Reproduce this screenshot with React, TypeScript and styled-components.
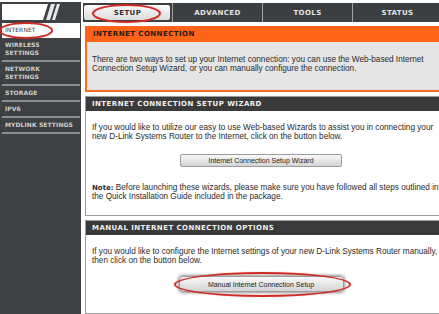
import React from 'react'
import styled, { createGlobalStyle, css } from 'styled-components'

const heading = `'DejaVu Sans', Verdana, sans-serif`
const copy = `'Liberation Sans', Arial, sans-serif`

const GlobalStyle = createGlobalStyle`
    html, body {
        margin: 0;
        padding: 0;
        background: #ffffff;
    }
`

const oval = css`
    &::after {
        content: '';
        position: absolute;
        border: 2px solid #cf2a24;
        border-radius: 50%;
        box-shadow: 0 0 1px rgba(207, 42, 36, 0.6);
        pointer-events: none;
    }
`

const Page = styled.div`
    display: flex;
    width: 439px;
    height: 314px;
    padding-top: 2px;
    box-sizing: border-box;
    overflow: hidden;
    background: #ffffff;
`

const Sidebar = styled.aside`
    flex: 0 0 81px;
    display: flex;
    flex-direction: column;
    padding: 2px 1px 0 2px;
    box-sizing: border-box;
    background: #3d4143;
`

const Logo = styled.div`
    height: 16px;
    margin: 0 1px 3px 0;

    svg {
        display: block;
    }
`

const NavList = styled.nav`
    display: flex;
    flex-direction: column;
`

const NavItem = styled.div<{ $active?: boolean }>`
    position: relative;
    padding: 3px 3px;
    font-family: ${heading};
    font-size: 6px;
    font-weight: bold;
    line-height: 8px;
    letter-spacing: 0.1px;
    text-transform: uppercase;
    color: #cfd0d0;
    border-bottom: 2px solid #8d9091;

    ${p =>
        p.$active &&
        css`
            padding: 3px 3px 4px;
            background: #ffffff;
            color: #3a3a3a;
            font-weight: normal;
            border-bottom: none;
            ${oval}
            &::after {
                left: -3px;
                top: -1px;
                width: 50px;
                height: 13px;
            }
        `}
`

const Main = styled.main`
    flex: 1;
    display: flex;
    flex-direction: column;
    margin-left: 2px;
    min-width: 0;
`

const Tabs = styled.div`
    display: grid;
    grid-template-columns: 89px 89px 89px 89px;
    column-gap: 1px;
    height: 20px;
    margin-top: 1px;
    background: #9fa3a4;
`

const Tab = styled.div<{ $active?: boolean }>`
    position: relative;
    display: flex;
    align-items: center;
    justify-content: center;
    font-family: ${heading};
    font-size: 7px;
    font-weight: bold;
    letter-spacing: 0.4px;
    color: #e3e4e4;
    background: #3b3f41;

    ${p =>
        p.$active &&
        css`
            color: #333333;

            &::before {
                content: '';
                position: absolute;
                inset: 2px 2px 2px 1px;
                background: linear-gradient(#fbfbfb, #dcdcdc);
                border-radius: 2px;
            }

            span {
                position: relative;
                z-index: 1;
            }

            ${oval}
            &::after {
                z-index: 2;
                left: 9px;
                right: 11px;
                top: 1px;
                bottom: -1px;
            }
        `}
`

const Sections = styled.div`
    display: flex;
    flex-direction: column;
    gap: 4px;
    padding: 4px 0 0 2px;
`

const Panel = styled.section<{ $tone?: 'orange' }>`
    border: 1px solid #9a9a9a;
    width: 358px;
    box-sizing: border-box;

    ${p =>
        p.$tone === 'orange' &&
        css`
            border: 2px solid #ff6a22;
            border-top: none;
        `}
`

const PanelHeader = styled.h2<{ $tone?: 'orange' }>`
    margin: 0;
    height: 14px;
    padding: 0 6px;
    display: flex;
    align-items: center;
    font-family: ${heading};
    font-size: 7px;
    font-weight: bold;
    letter-spacing: 0.45px;
    color: #f0f0f0;
    background: #3a3a3a;

    ${p =>
        p.$tone === 'orange' &&
        css`
            height: 16px;
            margin: 0 -2px;
            padding: 0 8px;
            color: #2a1a10;
            background: #ff6319;
        `}
`

const PanelBody = styled.div<{ $tone?: 'orange'; $tall?: boolean }>`
    padding: 13px 6px 0;
    min-height: ${p => (p.$tall ? 104 : 78)}px;
    box-sizing: border-box;
    background: #ffffff;

    ${p =>
        p.$tone === 'orange' &&
        css`
            min-height: 48px;
            padding: 14px 5px 0;
            background: #e5e5e5;
        `}
`

const Copy = styled.p`
    margin: 0;
    font-family: ${copy};
    font-size: 8.2px;
    line-height: 8.6px;
    color: #2a2a2a;
    white-space: nowrap;

    strong {
        font-family: ${heading};
        font-size: 7px;
    }
`

const ButtonRow = styled.div<{ $top: number; $bottom: number }>`
    display: flex;
    justify-content: center;
    margin: ${p => p.$top}px 6px ${p => p.$bottom}px 0;
`

const Button = styled.button<{ $highlight?: boolean }>`
    position: relative;
    width: 162px;
    height: 13px;
    padding: 0;
    font-family: ${copy};
    font-size: 7px;
    color: #222222;
    border: 1px solid #9c9c9c;
    border-radius: 2px;
    background: linear-gradient(#fafafa, #e2e2e2 60%, #d4d4d4);

    ${p =>
        p.$highlight &&
        css`
            width: 165px;
            height: 16px;
            border-radius: 4px;
            box-shadow: 0 0 3px 1px rgba(60, 60, 60, 0.55);
            ${oval}
            &::after {
                left: -6px;
                right: -8px;
                top: -5px;
                bottom: -6px;
            }
        `}
`

const LogoMark = () => (
    <svg width="77" height="16" viewBox="0 0 77 16">
        <rect width="77" height="16" fill="#3d4143" />
        <polygon points="0,0 46,0 41,16 0,16" fill="#ffffff" />
        <polygon points="49,0 53,0 48,16 44,16" fill="#e9e9e9" />
        <polygon points="55,0 58,0 53,16 50,16" fill="#e9e9e9" />
    </svg>
)

const navItems = ['Internet', 'Wireless Settings', 'Network Settings', 'Storage', 'IPv6', 'mydlink Settings']
const tabs = ['SETUP', 'ADVANCED', 'TOOLS', 'STATUS']

const App = () => (
    <>
        <GlobalStyle />
        <Page>
            <Sidebar>
                <Logo>
                    <LogoMark />
                </Logo>
                <NavList>
                    {navItems.map((item, index) => (
                        <NavItem key={item} $active={index === 0}>
                            {item === 'Wireless Settings' || item === 'Network Settings' ? (
                                <>
                                    {item.split(' ')[0]}
                                    <br />
                                    {item.split(' ')[1]}
                                </>
                            ) : (
                                item
                            )}
                        </NavItem>
                    ))}
                </NavList>
            </Sidebar>
            <Main>
                <Tabs>
                    {tabs.map((tab, index) => (
                        <Tab key={tab} $active={index === 0}>
                            <span>{tab}</span>
                        </Tab>
                    ))}
                </Tabs>
                <Sections>
                    <Panel $tone="orange">
                        <PanelHeader $tone="orange">INTERNET CONNECTION</PanelHeader>
                        <PanelBody $tone="orange">
                            <Copy>
                                There are two ways to set up your Internet connection: you can use the Web-based Internet
                                <br />
                                Connection Setup Wizard, or you can manually configure the connection.
                            </Copy>
                        </PanelBody>
                    </Panel>
                    <Panel>
                        <PanelHeader>INTERNET CONNECTION SETUP WIZARD</PanelHeader>
                        <PanelBody $tall>
                            <Copy>
                                If you would like to utilize our easy to use Web-based Wizards to assist you in connecting your
                                <br />
                                new D-Link Systems Router to the Internet, click on the button below.
                            </Copy>
                            <ButtonRow $top={13} $bottom={17}>
                                <Button>Internet Connection Setup Wizard</Button>
                            </ButtonRow>
                            <Copy>
                                <strong>Note:</strong> Before launching these wizards, please make sure you have followed all
                                steps outlined in
                                <br />
                                the Quick Installation Guide included in the package.
                            </Copy>
                        </PanelBody>
                    </Panel>
                    <Panel>
                        <PanelHeader>MANUAL INTERNET CONNECTION OPTIONS</PanelHeader>
                        <PanelBody>
                            <Copy>
                                If you would like to configure the Internet settings of your new D-Link Systems Router manually,
                                <br />
                                then click on the button below.
                            </Copy>
                            <ButtonRow $top={11} $bottom={10}>
                                <Button $highlight>Manual Internet Connection Setup</Button>
                            </ButtonRow>
                        </PanelBody>
                    </Panel>
                </Sections>
            </Main>
        </Page>
    </>
)

export default App
